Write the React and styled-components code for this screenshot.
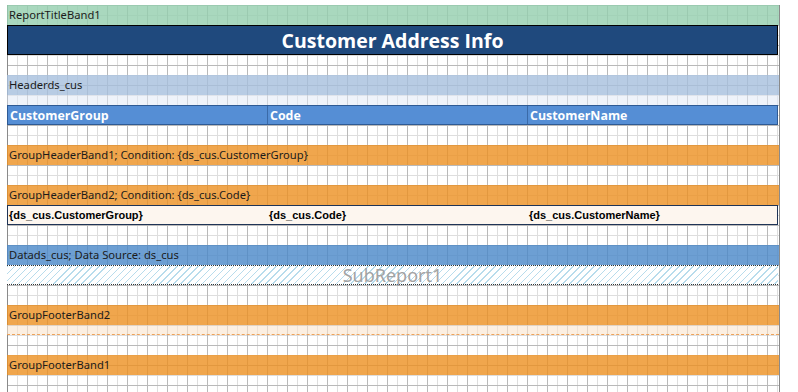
import React from "react";
import styled, { createGlobalStyle } from "styled-components";

const Global = createGlobalStyle`
  html, body { margin: 0; padding: 0; background: #ffffff; }
  body { font-family: "Noto Sans", "Open Sans", sans-serif; overflow: hidden; }
`;

const Page = styled.div`
  margin: 5px 0 0 7px;
  width: 773px;
  height: 400px;
  box-sizing: border-box;
  border-right: 1px solid #8a8a8a;
  box-shadow: inset 1px 0 0 #8a8a8a;
  background-color: #fff;
  background-image:
    linear-gradient(to right, #b9b9b9 1px, transparent 1px),
    linear-gradient(to bottom, #b9b9b9 1px, transparent 1px),
    linear-gradient(to right, #dedede 1px, transparent 1px),
    linear-gradient(to bottom, #dedede 1px, transparent 1px);
  background-size: 20px 20px, 20px 20px, 10px 10px, 10px 10px;
  background-position: 0 0, 0 0, 0 0, 0 0;
  display: flex;
  flex-direction: column;
`;

const Band = styled.div`
  height: 20px;
  flex: none;
  background: ${(p) => p.$bg || "transparent"};
  display: flex;
  align-items: center;
  padding-left: 2px;
  padding-bottom: 1px;
  font-size: 11.2px;
  color: #1b1b1b;
  white-space: nowrap;
  box-sizing: border-box;
`;

const Spacer = styled.div`
  height: ${(p) => p.$h}px;
  flex: none;
  background: ${(p) => p.$bg || "transparent"};
  box-sizing: border-box;
  ${(p) => (p.$dashed ? `border-bottom: 1px dashed #eea35a;` : "")}
`;

const TitleBox = styled.div`
  height: 30px;
  width: 771px;
  flex: none;
  box-sizing: border-box;
  background: #1f497d;
  border: 1px solid #000;
  display: flex;
  align-items: center;
  justify-content: center;
  color: #fff;
  font-family: "Open Sans", sans-serif;
  font-weight: 700;
  font-size: 19.5px;
`;

const ColumnRow = styled.div`
  height: 20px;
  width: 771px;
  flex: none;
  box-sizing: border-box;
  display: grid;
  grid-template-columns: 260px 260px 1fr;
  background: ${(p) => p.$bg};
  border: 1px solid ${(p) => p.$border};
`;

const HeadCell = styled.div`
  display: flex;
  align-items: center;
  padding-left: 2px;
  color: #fff;
  font-family: "Open Sans", sans-serif;
  font-weight: 700;
  font-size: 12.4px;
  border-left: ${(p) => (p.$first ? "none" : "1px solid #3a6aa8")};
  margin-left: ${(p) => (p.$first ? "0" : "-1px")};
`;

const DataCell = styled.div`
  display: flex;
  align-items: center;
  padding-left: 1px;
  color: #000;
  font-family: "Liberation Sans", Arial, sans-serif;
  font-weight: 700;
  font-size: 11px;
`;

const SubReport = styled.div`
  height: 20px;
  width: 771px;
  flex: none;
  box-sizing: border-box;
  border-top: 1px dotted #333;
  border-bottom: 1px dotted #333;
  background-color: #fff;
  background-image: repeating-linear-gradient(
    135deg,
    #b8dcec 0px,
    #b8dcec 1px,
    #ffffff 1px,
    #ffffff 5px
  );
  display: flex;
  align-items: center;
  justify-content: center;
  color: #a3a3a3;
  font-family: "Noto Sans", sans-serif;
  font-size: 18px;
  line-height: 18px;
`;

const cols = ["CustomerGroup", "Code", "CustomerName"];
const fields = ["{ds_cus.CustomerGroup}", "{ds_cus.Code}", "{ds_cus.CustomerName}"];

const GREEN = "rgba(147, 206, 174, 0.8)";
const LIGHTBLUE = "rgba(166, 191, 221, 0.8)";
const PALEBLUE = "rgba(225, 233, 245, 0.55)";
const ORANGE = "rgba(236, 144, 33, 0.8)";
const DATABLUE = "rgba(73, 135, 200, 0.8)";
const PEACH = "rgba(250, 228, 205, 0.6)";

export default function App() {
  return (
    <>
      <Global />
      <Page>
        <Band $bg={GREEN}>ReportTitleBand1</Band>
        <TitleBox>Customer Address Info</TitleBox>
        <Spacer $h={20} />
        <Band $bg={LIGHTBLUE}>Headerds_cus</Band>
        <Spacer $h={10} $bg={PALEBLUE} />
        <ColumnRow $bg="#558ed5" $border="#2e5a94">
          {cols.map((c, i) => (
            <HeadCell key={c} $first={i === 0}>
              {c}
            </HeadCell>
          ))}
        </ColumnRow>
        <Spacer $h={20} />
        <Band $bg={ORANGE}>GroupHeaderBand1; Condition: {"{ds_cus.CustomerGroup}"}</Band>
        <Spacer $h={20} />
        <Band $bg={ORANGE}>GroupHeaderBand2; Condition: {"{ds_cus.Code}"}</Band>
        <ColumnRow $bg="#fdf6ef" $border="#1f3456">
          {fields.map((f) => (
            <DataCell key={f}>{f}</DataCell>
          ))}
        </ColumnRow>
        <Spacer $h={20} />
        <Band $bg={DATABLUE}>Datads_cus; Data Source: ds_cus</Band>
        <SubReport>SubReport1</SubReport>
        <Spacer $h={20} />
        <Band $bg={ORANGE}>GroupFooterBand2</Band>
        <Spacer $h={10} $bg={PEACH} $dashed />
        <Spacer $h={20} />
        <Band $bg={ORANGE}>GroupFooterBand1</Band>
      </Page>
    </>
  );
}
